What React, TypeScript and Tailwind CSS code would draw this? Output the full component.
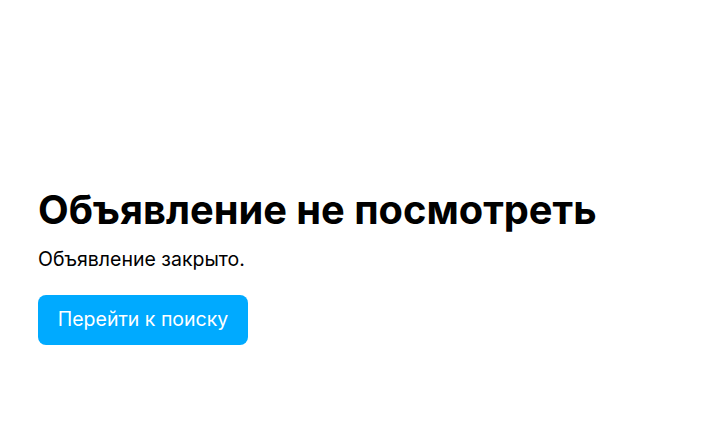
export default function App() {
  return (
    <div className="w-[703px] h-[441px] bg-white flex flex-col px-[38px] pt-[186px]" style={{ fontFamily: "Inter, 'Noto Sans', sans-serif" }}>
      <div className="flex flex-col items-start">
        <h1 className="text-[39.8px] leading-[48px] font-bold text-black">Объявление не посмотреть</h1>
        <p className="mt-[13px] text-[19.5px] leading-[24px] text-black">Объявление закрыто.</p>
        <button className="mt-[24px] h-[50px] w-[210px] rounded-[8px] bg-[#00aaff] text-white text-[19.5px] flex items-center justify-center">Перейти к поиску</button>
      </div>
    </div>
  );
}
